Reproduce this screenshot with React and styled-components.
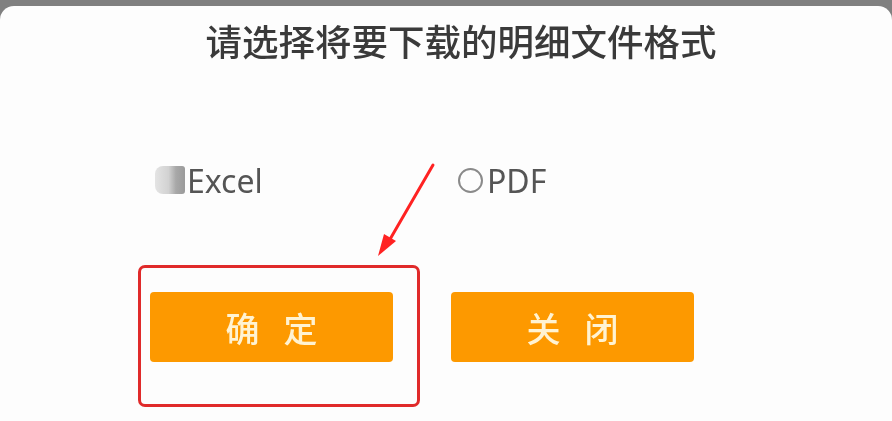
import React from "react";
import styled, { createGlobalStyle } from "styled-components";

const Global = createGlobalStyle`
  html, body { margin: 0; padding: 0; background: #808080; }
  body { width: 892px; height: 421px; overflow: hidden; font-family: "Noto Sans", "Noto Sans CJK SC", sans-serif; }
`;

const Card = styled.div`
  position: relative;
  margin-top: 6px;
  height: 415px;
  background: #fdfdfd;
  border-radius: 14px 14px 0 0;
  display: flex;
  flex-direction: column;
  filter: blur(0.5px);
`;

const Title = styled.h1`
  margin: 0;
  padding-top: 14px;
  padding-left: 30px;
  text-align: center;
  font-family: "Noto Sans CJK SC", sans-serif;
  font-weight: 500;
  font-size: 36.5px;
  line-height: 42px;
  color: #3a3a3a;
`;

const Options = styled.div`
  display: flex;
  align-items: center;
  padding-left: 155px;
  margin-top: 98px;
  height: 40px;
`;

const Option = styled.label`
  display: flex;
  align-items: center;
  width: ${(p) => p.$w}px;
  font-family: "Noto Sans", sans-serif;
  font-size: 32px;
  color: #555;
  gap: 2px;
`;

const RadioChecked = styled.span`
  width: 30px;
  height: 28px;
  border-radius: 8px 3px 3px 8px;
  background: linear-gradient(90deg, #e4e4e4 0%, #d2d2d2 45%, #a8a8a8 70%, #9a9a9a 100%);
`;

const Radio = styled.span`
  width: 25px;
  height: 25px;
  border-radius: 50%;
  border: 2px solid #8a8a8a;
  box-sizing: border-box;
  margin-right: 2px;
`;

const Buttons = styled.div`
  display: flex;
  padding-left: 150px;
  gap: 58px;
  margin-top: 92px;
`;

const Marked = styled.div`
  position: relative;
`;

const Button = styled.button`
  width: 243px;
  height: 70px;
  border: none;
  border-radius: 4px;
  background: #fd9900;
  color: #fff3d2;
  font-family: "Noto Sans CJK SC", sans-serif;
  font-size: 34px;
  font-weight: 500;
  letter-spacing: 24px;
  text-indent: 24px;
  padding: 0;
  display: flex;
  align-items: center;
  justify-content: center;
`;

const Highlight = styled.div`
  position: absolute;
  left: -12px;
  top: -27px;
  width: 282px;
  height: 142px;
  box-sizing: border-box;
  border: 3px solid #e02a2a;
  border-radius: 7px;
  pointer-events: none;
`;

const Arrow = styled.svg`
  position: absolute;
  left: 370px;
  top: 152px;
  pointer-events: none;
`;

export default function App() {
  return (
    <>
      <Global />
      <Card>
        <Title>请选择将要下载的明细文件格式</Title>
        <Options>
          <Option $w={303}>
            <RadioChecked />
            Excel
          </Option>
          <Option $w={120}>
            <Radio />
            PDF
          </Option>
        </Options>
        <Buttons>
          <Marked>
            <Button>确定</Button>
            <Highlight />
          </Marked>
          <Button>关闭</Button>
        </Buttons>
        <Arrow width="80" height="110" viewBox="0 0 80 110">
          <path d="M63 7 L19 83" stroke="#f22" strokeWidth="3" strokeLinecap="round" />
          <path d="M8 98 L14 76 L26 83 Z" fill="#f22" />
        </Arrow>
      </Card>
    </>
  );
}
